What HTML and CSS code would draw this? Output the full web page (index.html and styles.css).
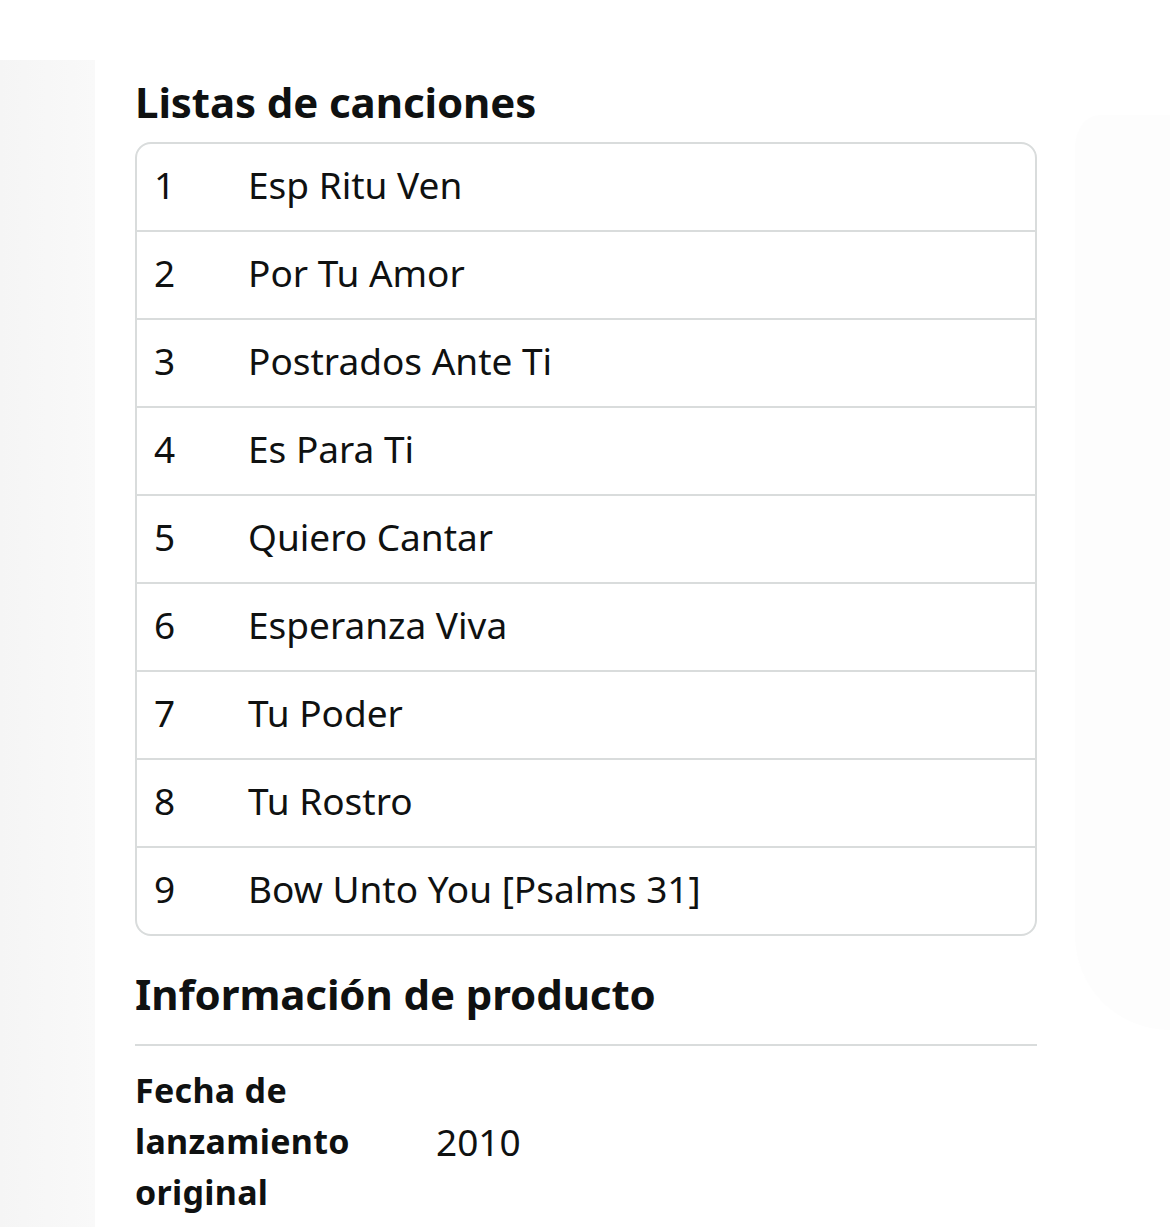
FILE: index.html
```html
<!DOCTYPE html>
<html lang="es">
<head>
<meta charset="utf-8">
<title>Listas de canciones</title>
<link rel="stylesheet" href="styles.css">
</head>
<body>
<div class="page">
  <aside class="side-left"></aside>
  <main class="content">
    <h2 class="section-title">Listas de canciones</h2>
    <ol class="tracks">
      <li class="track"><span class="num">1</span><span class="name">Esp Ritu Ven</span></li>
      <li class="track"><span class="num">2</span><span class="name">Por Tu Amor</span></li>
      <li class="track"><span class="num">3</span><span class="name">Postrados Ante Ti</span></li>
      <li class="track"><span class="num">4</span><span class="name">Es Para Ti</span></li>
      <li class="track"><span class="num">5</span><span class="name">Quiero Cantar</span></li>
      <li class="track"><span class="num">6</span><span class="name">Esperanza Viva</span></li>
      <li class="track"><span class="num">7</span><span class="name">Tu Poder</span></li>
      <li class="track"><span class="num">8</span><span class="name">Tu Rostro</span></li>
      <li class="track"><span class="num">9</span><span class="name">Bow Unto You [Psalms 31]</span></li>
    </ol>
    <h2 class="section-title info-title">Información de producto</h2>
    <div class="info">
      <div class="info-row">
        <div class="info-label">Fecha de lanzamiento original</div>
        <div class="info-value">2010</div>
      </div>
    </div>
  </main>
  <aside class="side-right"></aside>
</div>
</body>
</html>
```
FILE: styles.css
```css
* { box-sizing: border-box; }
html, body { margin: 0; padding: 0; background: #ffffff; }
body {
  font-family: "Noto Sans", "Open Sans", "Liberation Sans", sans-serif;
  color: #0f1111;
  height: 1227px;
  overflow: hidden;
}
.page {
  display: flex;
  height: 1227px;
}
.side-left {
  width: 95px;
  flex: none;
  margin-top: 60px;
  background: linear-gradient(to right, #f5f5f5, #f9f9f9);
}
.content {
  width: 902px;
  flex: none;
  margin-left: 40px;
  padding-top: 73px;
}
.side-right {
  flex: 1;
  margin-top: 115px;
  margin-left: 38px;
  height: 915px;
  background: #fdfdfd;
  border-radius: 120px 0 0 460px / 160px 0 0 460px;
}
.section-title {
  margin: 0;
  font-size: 42px;
  font-weight: 700;
  line-height: 58px;
  letter-spacing: -0.1px;
}
.tracks {
  list-style: none;
  margin: 11px 0 0 0;
  padding: 0;
  border: 2px solid #d9dcdc;
  border-radius: 16px;
  overflow: hidden;
}
.track {
  display: flex;
  align-items: center;
  height: 88px;
  border-top: 2px solid #d9dcdc;
  font-size: 37px;
  padding-left: 17px;
  padding-bottom: 5px;
}
.track:first-child { border-top: none; height: 86px; }
.num { width: 94px; flex: none; }
.name { flex: 1; }
.info-title {
  margin-top: 29px;
}
.info {
  margin-top: 21px;
  border-top: 2px solid #d9dcdc;
  padding-top: 19px;
}
.info-row {
  display: flex;
  align-items: center;
}
.info-label {
  width: 240px;
  font-size: 34px;
  font-weight: 700;
  line-height: 51px;
  letter-spacing: 0.3px;
}
.info-value {
  margin-left: 61px;
  font-size: 37px;
}
```
